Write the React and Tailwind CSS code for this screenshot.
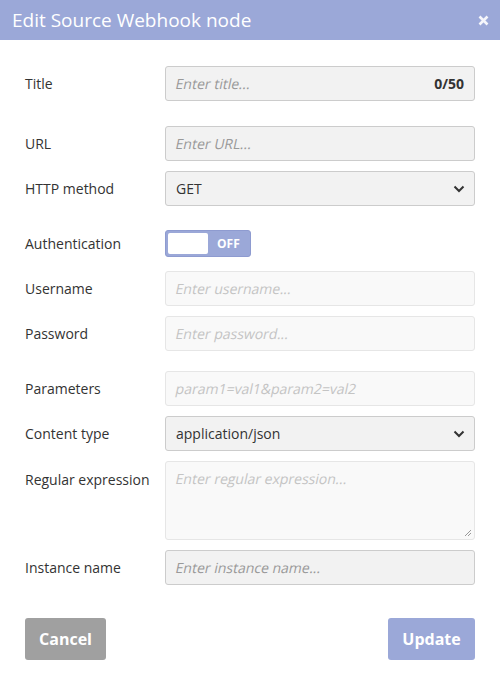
import React from "react";

const font = { fontFamily: '"Open Sans", sans-serif' };

const Chevron = () => (
  <svg width="12" height="8" viewBox="0 0 12 8" className="absolute right-[9px] top-1/2 -translate-y-1/2">
    <path d="M1.5 1.5 L6 6 L10.5 1.5" fill="none" stroke="#333" strokeWidth="2" />
  </svg>
);

// placeholders in the shot look like a slanted regular face
const Ph = ({ children, className = "" }) => (
  <span className={`inline-block -skew-x-12 ${className}`}>{children}</span>
);

const Row = ({ label, className = "", children, top = false }) => (
  <div className={`flex ${top ? "items-start" : "items-center"} ${className}`}>
    <div className={`w-[140px] shrink-0 text-[14px] text-[#333] ${top ? "pt-[8px]" : ""}`}>{label}</div>
    <div className="w-[310px]">{children}</div>
  </div>
);

const Input = ({ placeholder, disabled }) => (
  <div
    className={`h-[35px] rounded-[3px] border px-[10px] flex items-center text-[14px] ${
      disabled ? "bg-[#f9f9f9] border-[#e6e6e6] text-[#c4c4c4]" : "bg-[#f2f2f2] border-[#cccccc] text-[#999]"
    }`}
  >
    <Ph>{placeholder}</Ph>
  </div>
);

const Select = ({ value }) => (
  <div className="relative h-[35px] rounded-[3px] border border-[#cccccc] bg-[#f2f2f2] px-[10px] flex items-center text-[14px] text-[#333]">
    {value}
    <Chevron />
  </div>
);

export default function App() {
  return (
    <div style={font} className="w-[500px] h-[685px] bg-white relative overflow-hidden">
      <div className="h-[40px] bg-[#9ba8d8] flex items-center justify-between pl-[12px] pr-[11px]">
        <span className="text-[19px] text-white">Edit Source Webhook node</span>
        <svg width="11" height="11" viewBox="0 0 11 11" className="opacity-90">
          <path d="M1.5 1.5 L9.5 9.5 M9.5 1.5 L1.5 9.5" stroke="#fff" strokeWidth="2.6" />
        </svg>
      </div>
      <div className="px-[25px] pt-[26px]">
        <Row label="Title">
          <div className="h-[35px] rounded-[3px] border border-[#cccccc] bg-[#f2f2f2] px-[10px] flex items-center justify-between text-[14px]">
            <Ph className="text-[#999]">Enter title...</Ph>
            <span className="font-bold text-[#333]">0/50</span>
          </div>
        </Row>
        <Row label="URL" className="mt-[25px]">
          <Input placeholder="Enter URL..." />
        </Row>
        <Row label="HTTP method" className="mt-[10px]">
          <Select value="GET" />
        </Row>
        <Row label="Authentication" className="mt-[20px] h-[35px]">
          <div className="w-[86px] h-[27px] rounded-[3px] border border-[#8e9bd0] bg-[#9ba8d8] flex items-center pl-[2px]">
            <div className="w-[40px] h-[21px] bg-white rounded-[2px]" />
            <span className="ml-[9px] text-white text-[12px] font-bold">OFF</span>
          </div>
        </Row>
        <Row label="Username" className="mt-[10px]">
          <Input placeholder="Enter username..." disabled />
        </Row>
        <Row label="Password" className="mt-[10px]">
          <Input placeholder="Enter password..." disabled />
        </Row>
        <Row label="Parameters" className="mt-[20px]">
          <Input placeholder="param1=val1&param2=val2" disabled />
        </Row>
        <Row label="Content type" className="mt-[10px]">
          <Select value="application/json" />
        </Row>
        <Row label="Regular expression" className="mt-[10px]" top>
          <div className="relative h-[79px] rounded-[3px] border border-[#e6e6e6] bg-[#f9f9f9] px-[10px] pt-[6px] text-[14px] text-[#c4c4c4]">
            <Ph>Enter regular expression...</Ph>
            <svg width="8" height="8" viewBox="0 0 8 8" className="absolute right-[2px] bottom-[2px]">
              <path d="M7 1 L1 7 M7 4 L4 7" stroke="#999" strokeWidth="1" />
            </svg>
          </div>
        </Row>
        <Row label="Instance name" className="mt-[10px]">
          <Input placeholder="Enter instance name..." />
        </Row>
        <div className="flex justify-between mt-[33px]">
          <button className="h-[42px] w-[81px] rounded-[3px] bg-[#a0a0a0] text-white text-[16px] font-bold">Cancel</button>
          <button className="h-[42px] w-[87px] rounded-[3px] bg-[#9ba8d8] text-white text-[16px] font-bold">Update</button>
        </div>
      </div>
    </div>
  );
}
